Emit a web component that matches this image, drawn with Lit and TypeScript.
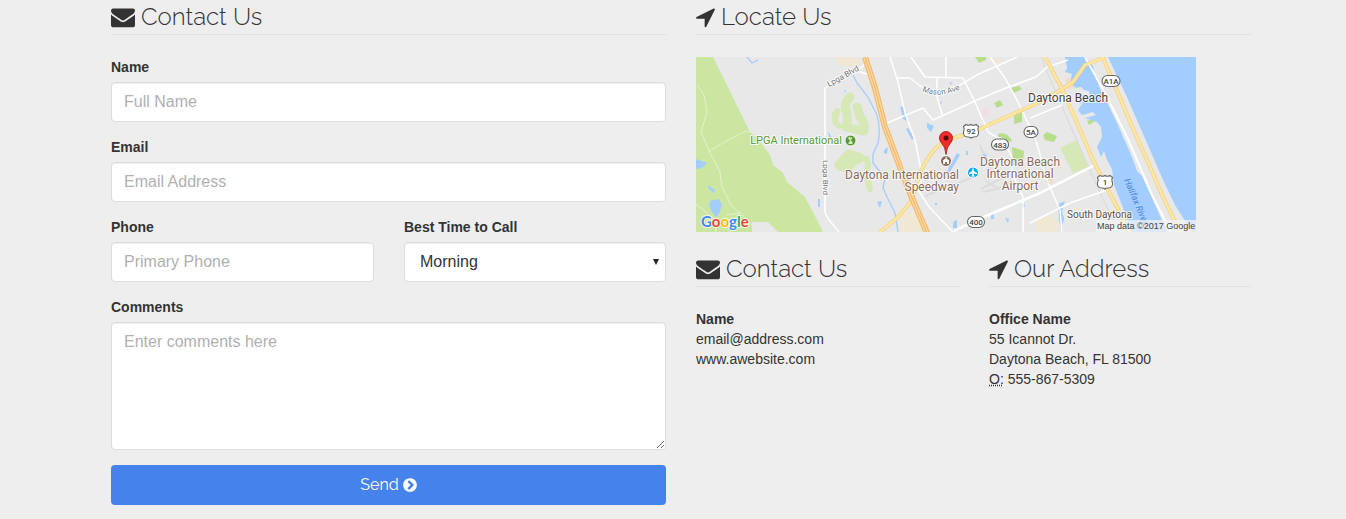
import { LitElement, html, css, svg } from "lit";
import { customElement } from "lit/decorators.js";

const envelope = html`<svg class="icon" viewBox="0 0 1792 1792" width="24" height="24" aria-hidden="true"><path d="M1792 710v794q0 66-47 113t-113 47h-1472q-66 0-113-47t-47-113v-794q44 49 101 87 362 246 497 345 57 42 92.5 65.5t94.5 48 110 24.5h2q51 0 110-24.5t94.5-48 92.5-65.5q170-123 498-345 57-39 100-87zm0-294q0 79-49 151t-122 123q-376 261-468 325-10 7-42.5 31t-54 38.5-52 32.5-57.5 27-50 9h-2q-23 0-50-9t-57.5-27-52-32.5-54-38.5-42.5-31q-91-64-262-182.5t-205-142.5q-62-42-117-115.5t-55-136.5q0-78 41.5-130t118.5-52h1472q65 0 112.5 47t47.5 113z"/></svg>`;
const arrow = html`<svg class="icon" viewBox="192 0 1408 1792" width="19" height="24" aria-hidden="true"><path d="M1593 349l-640 1280q-17 35-57 35-5 0-15-2-22-5-35.5-22.5t-13.5-39.5v-576h-576q-22 0-39.5-13.5t-22.5-35.5 4-42 29-30l1280-640q13-7 29-7 27 0 45 19 15 14 18.5 34.5t-6.5 39.5z"/></svg>`;
const chevron = html`<svg class="icon" viewBox="128 0 1536 1792" width="14" height="16" aria-hidden="true"><path d="M845 1395l454-454q19-19 19-45t-19-45l-454-454q-19-19-45-19t-45 19l-102 102q-19 19-19 45t19 45l307 307-307 307q-19 19-19 45t19 45l102 102q19 19 45 19t45-19zm819-499q0 209-103 385.5t-279.5 279.5-385.5 103-385.5-103-279.5-279.5-103-385.5 103-385.5 279.5-279.5 385.5-103 385.5 103 279.5 279.5 103 385.5z"/></svg>`;

const shield = (x: number, y: number, w: number, text: string) => svg`
  <rect x=${x - w / 2} y=${y - 5.5} width=${w} height="11" rx="5.5" fill="#fff" stroke="#666" stroke-width="1.1"/>
  <text class="route" x=${x} y=${y + 3}>${text}</text>`;

const usShield = (x: number, y: number, text: string) => svg`
  <path transform="translate(${x} ${y})" d="M-5-6.500Q-2.500-5 0-6.500Q2.500-5 5-6.500L7.500-4.500Q6-2 7.500 1Q8 6 3 6Q1 6 0 7Q-1 6-3 6Q-8 6-7.500 1Q-6-2-7.500-4.500Z" fill="#fff" stroke="#666" stroke-width="1.100"/>
  <text class="route" x=${x} y=${y + 3}>${text}</text>`;

@customElement("location-map")
export class LocationMap extends LitElement {
  static styles = css`
    :host { display: block; max-width: 500px; }
    .map { display: block; width: 100%; height: auto; font-family: Roboto, sans-serif; }
    .halo { paint-order: stroke; stroke: #fff; stroke-opacity: 0.8; stroke-width: 2px; stroke-linejoin: round; }
    .city { font-size: 12px; fill: #4d4138; }
    .town { font-size: 10px; fill: #5d5048; }
    .park { font-size: 11px; fill: #5a9a32; }
    .poi { font-size: 12px; fill: #8a6a58; }
    .street { font-size: 8px; fill: #777; }
    .river { font-size: 9px; fill: #4b86d6; font-style: italic; }
    .route { font-size: 8px; fill: #444; text-anchor: middle; font-weight: 500; }
    .end { text-anchor: end; }
    .mid { text-anchor: middle; }
    .logo { font-family: Lato, sans-serif; font-size: 15px; font-weight: 700; }
    .credit { font-family: "Liberation Sans", sans-serif; font-size: 9px; fill: #444; }
  `;
  render() {
    return html`<svg class="map" viewBox="0 0 500 175" role="img" aria-label="Map of Daytona Beach">
      <rect width="500" height="175" fill="#e8e8e8"/>
      <path fill="#cae6a1" d="M0 0H17L54 75L62 82L74 98L77 108L87 116L91 125L109 140L118 157L126 173V175H82L72 165H56V175H0Z"/>
      <g fill="none" stroke="#d6e8b5" stroke-linecap="round" stroke-linejoin="round">
        <path stroke-width="6" d="M139 57Q138 66 143 69M141 54L140 60"/>
        <path stroke-width="9" d="M154 40Q147 47 150 54Q153 61 150 70L162 73L168 74Q170 66 164 60Q162 52 161 50"/>
        <path stroke-width="11" d="M144 108Q152 112 156 104L163 101L153 98Z"/>
        <path stroke-width="6" d="M170 102Q174 108 170 116Q171 124 174 132"/>
      </g>
      <path fill="#d6e8b5" d="M364 91L381 83L392 110L377 116Z"/>
      <g fill="#b8dd8b">
        <path d="M279 0h11v3l-7 3zM314 31l9-2 3 3-8 4zM298 46l6-3 3 5-6 3zM318 57l8-3v11l-8 2zM347 78l4-3 10 4-3 6-9-2zM391 64l10-4v3l-8 5zM302 77q9-3 14 7l-4 1q-4-5-10-5zM316 90l12 4-1 12-10 2z"/>
      </g>
      <path fill="#f0e7d5" d="M140 0h19l6 6-5 4-20-2zM296 2l7-2 3 7-7 2zM203 152l18 4 6 19h-24zM340 165l12-9 12 10-4 9h-20z"/>
      <path fill="#f4dce5" d="M286 53l6-3 1 8-6 3z"/>
      <path fill="#f3dcc8" d="M369 22l4-2 5 10-5 3zM351 123l5-3 1 6-5 2z"/>
      <path stroke="#dcdcdc" fill="none" stroke-width="2" d="M229 139L280 119M284 88L296 117M283 99H289M285 132L306 121M290 124L301 131M287 135L305 131"/>
      <path stroke="#d8d8d8" fill="none" d="M345 0L354 22L388 100L407 142L423 175"/>
      <path fill="#a3cdff" d="M412 0L430 38L451 86L467 123L479 148L496 175H500V0Z"/>
      <path fill="#a3cdff" d="M369 0L371 11L369 15L376 17L374 25L380 31L379 36L384 41V47L388 44L382 53L386 58L397 55L400 58L389 61L401 65L405 70L406 80L401 90L405 100L408 94L411 103L416 112L418 128L424 143L436 175H471L457 143L446 119L441 114L436 100L421 66L411 45L406 36L400 22L397 9L389 0Z"/>
      <path fill="#e8e8e8" d="M379 31l6-1 3 3 5 1 1 7-6-3-8-1z"/>
      <g fill="#a3cdff">
        <path d="M0 102L11 106L6 111L0 112ZM12 128L19 133L18 136L13 132ZM14 144L23 142L26 148L23 157L20 160L16 155L13 148ZM132 74l3 5 1 7-3-5zM122 142h2v8h-2zM148 33l2 1-1 2zM204 49l4 2 3 13-4-2zM231 66l7 3-3 6-4-4zM210 72l2-1 6 10-2 2zM188 93l4-3-1 7-3-1zM203 108l4 3v5l-3-3zM214 117l3 2-1 3zM181 145l5-1-2 7zM258 164l3-1v8h-4v-4zM252 112l9-16 3 2-10 17-5 2zM244 45l2-1-1 4zM253 26l3-1-1 3zM239 146h2v2h-2zM287 97l4 1-2 6zM270 94h2v4h-2zM295 157l3-1v6h-3zM309 161l4 1-1 4zM325 148l4-1-1 4zM362 147l7-3-3 10 2 8-3 9-2-8z"/>
      </g>
      <g fill="none" stroke="#a3cdff" stroke-width="1.300">
        <path d="M51 0L56 6L62 3M156 16L161 26L172 40L181 58Q185 71 182 86L177 97L177 106L189 121L187 131L191 140L199 156L202 175"/>
      </g>
      <g fill="none" stroke="#e5f2ce" stroke-width="1">
        <path d="M1 28L8 38L11 55L5 75L13 94L24 115L26 130L35 148L46 158L56 168M12 95L25 87L50 74L54 75M0 147L18 162L20 175M30 158L45 156"/>
      </g>
      <g fill="none" stroke="#fff" stroke-width="1.500" stroke-linejoin="round">
        <path d="M169 7L161 14L129 31V156L133 163L143 175M161 14L171 17"/>
        <path d="M194 0L202 25L209 56L219 83L224 108L226 122L222 131L224 136L234 151L257 175"/>
        <path d="M215 0L229 20L267 21L279 45L292 75L307 84L316 100V116L327 140V175"/>
        <path d="M294 0L309 21L321 43L334 70L339 80L351 123L364 153L366 175"/>
        <path d="M201 21H214L227 31Q250 38 264 28L281 18L321 0M250 0V20M241 21V40L247 60"/>
        <path d="M186 71L191 66L227 51L237 63L281 43L310 31L340 20L351 10L372 3M334 61L366 48M334 166L354 156L374 146L411 133"/>
        <path d="M389 0L409 36L431 80L444 110L457 140L475 175" stroke-width="2"/>
        <path d="M257 175L264 171L297 156L344 136L399 108" stroke-width="2.500"/>
      </g>
      <g fill="none" stroke-linejoin="round">
        <path stroke="#efd28a" stroke-width="4" d="M184 175L201 161L214 146L219 133Q224 112 231 103Q239 89 251 83L277 75L297 66L344 45L366 32L377 25L389 8L407 1L422 36L434 65L454 110L467 140L484 175M349 0L366 32L384 73L397 103L412 133L434 175"/>
        <path stroke="#ffe6a0" stroke-width="2.500" d="M184 175L201 161L214 146L219 133Q224 112 231 103Q239 89 251 83L277 75L297 66L344 45L366 32L377 25L389 8L407 1L422 36L434 65L454 110L467 140L484 175M349 0L366 32L384 73L397 103L412 133L434 175"/>
        <path stroke="#f2b66a" stroke-width="6" d="M169 0L179 31L189 70L204 110L214 136L232 178"/>
        <path stroke="#ffd59a" stroke-width="4" d="M169 0L179 31L189 70L204 110L214 136L232 178"/>
        <path stroke="#f2b66a" stroke-width="1" d="M169 0L179 31L189 70L204 110L214 136L232 178"/>
      </g>
      <text class="street halo" transform="translate(133 30) rotate(-29)">Lpga Blvd</text>
      <text class="street halo" transform="translate(127 103) rotate(90)">Lpga Blvd</text>
      <path id="mason" fill="none" d="M226 34Q245 43 268 30"/>
      <text class="street halo"><textPath href="#mason">Mason Ave</textPath></text>
      <text class="river" transform="translate(428 123) rotate(67)">Halifax River</text>
      <text class="park halo end" x="146" y="87">LPGA International</text>
      <circle cx="154.500" cy="83.500" r="5.500" fill="#5a9a32" stroke="#fff"/>
      <path d="M152 81l1.500-1.500 1 1.500 1-1 1 1-2 2.500 2 1v2.500h-4v-1.500l1.500-1.500z" fill="#d6e8b5"/>
      <text class="city halo" x="332" y="45">Daytona Beach</text>
      <text class="poi halo end" x="263" y="122">Daytona International</text>
      <text class="poi halo end" x="263" y="134">Speedway</text>
      <text class="poi halo mid" x="324" y="109">Daytona Beach</text>
      <text class="poi halo mid" x="324" y="121">International</text>
      <text class="poi halo mid" x="324" y="133">Airport</text>
      <text class="town halo" x="371" y="161">South Daytona</text>
      ${usShield(275, 74, "92")}
      ${usShield(409, 125, "1")}
      ${shield(304, 87.5, 17, "483")}
      ${shield(335, 75, 14, "5A")}
      ${shield(415, 24, 18, "A1A")}
      ${shield(280, 165, 17, "400")}
      <circle cx="277" cy="115.500" r="5.500" fill="#12a9f4" stroke="#fff"/>
      <path fill="#fff" d="M276.300 111.500h1.400v2.500l3.300 2v1.200l-3.300-.8v1.800l1 .8v.8l-1.700-.4l-1.700.4v-.8l1-.8v-1.800l-3.300.8v-1.200l3.300-2z"/>
      <circle cx="250" cy="104" r="5.500" fill="#8a6a58" stroke="#fff"/>
      <path fill="#fff" d="M247 107v-3.500l3-2.500 3 2.500v3.500h-2v-2h-2v2zM249 99.500l3 .8-2 .7z"/>
      <path fill="#ee2c2b" stroke="#a8100f" stroke-width=".8" d="M250 97.500Q249.500 90 245.500 86Q243.500 84 243.500 81A6.500 6.500 0 0 1 256.500 81Q256.500 84 254.500 86Q250.500 90 250 97.500Z"/>
      <circle cx="250" cy="81" r="2.500" fill="#5c0b0b"/>
      <text class="logo halo" x="5" y="170"><tspan fill="#4285f4">G</tspan><tspan fill="#ea4335">o</tspan><tspan fill="#fbbc05">o</tspan><tspan fill="#4285f4">g</tspan><tspan fill="#34a853">l</tspan><tspan fill="#ea4335">e</tspan></text>
      <rect x="400" y="163" width="100" height="12" fill="#f5f5f5" fill-opacity=".7"/>
      <text class="credit" x="401" y="172">Map data ©2017 Google</text>
    </svg>`;
  }
}

@customElement("app-root")
export class AppRoot extends LitElement {
  static styles = css`
    :host {
      display: block;
      min-height: 100vh;
      background: #eee;
      color: #333;
      font: 14px/20px "Liberation Sans", Arial, sans-serif;
    }
    *, *::before, *::after { box-sizing: border-box; }
    .page {
      display: grid;
      grid-template-columns: 1fr 1fr;
      gap: 30px;
      align-items: start;
      margin: 0 95px 0 111px;
    }
    .heading {
      display: flex;
      align-items: center;
      gap: 6px;
      margin: 0 0 22px;
      border-bottom: 1px solid #e2e2e2;
      font: 300 24px/34px Raleway, Lato, sans-serif;
    }
    .icon { flex: none; fill: currentColor; }
    .form { display: grid; gap: 15px; }
    .field { display: grid; gap: 5px; min-width: 0; }
    .pair { display: grid; grid-template-columns: 263fr 262fr; gap: 30px; }
    .label { font-weight: 700; }
    .control {
      display: block;
      width: 100%;
      height: 40px;
      margin: 0;
      padding: 8px 12px;
      border: 1px solid #ddd;
      border-radius: 4px;
      background: #fff;
      box-shadow: inset 0 1px 1px rgba(0, 0, 0, 0.075);
      color: #333;
      font: 16px/22px "Liberation Sans", Arial, sans-serif;
      appearance: none;
    }
    .control::placeholder { color: #b0b0b0; opacity: 1; }
    .area { height: 128px; resize: vertical; }
    .picker { position: relative; }
    .choice { padding-left: 15px; }
    .caret { position: absolute; right: 7px; top: 17px; fill: #222; pointer-events: none; }
    .send {
      display: flex;
      align-items: center;
      justify-content: center;
      gap: 4px;
      width: 100%;
      height: 40px;
      border: 0;
      border-radius: 4px;
      background: #4582ec;
      color: #fff;
      font: 400 16px/22px Raleway, Lato, sans-serif;
    }
    .places { display: grid; grid-template-columns: 264fr 262fr; gap: 29px; margin-top: 20px; }
    .address { font-style: normal; }
    .office { text-decoration: underline dotted; cursor: help; }
  `;
  render() {
    return html`<main class="page">
      <section>
        <h2 class="heading">${envelope}<span>Contact Us</span></h2>
        <form class="form" @submit=${(e: Event) => e.preventDefault()}>
          <div class="field"><label class="label" for="name">Name</label><input class="control" id="name" type="text" placeholder="Full Name"></div>
          <div class="field"><label class="label" for="email">Email</label><input class="control" id="email" type="email" placeholder="Email Address"></div>
          <div class="pair">
            <div class="field"><label class="label" for="phone">Phone</label><input class="control" id="phone" type="tel" placeholder="Primary Phone"></div>
            <div class="field"><label class="label" for="time">Best Time to Call</label>
              <div class="picker">
                <select class="control choice" id="time"><option>Morning</option><option>Afternoon</option><option>Evening</option></select>
                <svg class="caret" width="6" height="6" viewBox="0 0 6 6" aria-hidden="true"><path d="M0 0H6L3 6Z"/></svg>
              </div>
            </div>
          </div>
          <div class="field"><label class="label" for="comments">Comments</label><textarea class="control area" id="comments" placeholder="Enter comments here"></textarea></div>
          <button class="send" type="submit"><span>Send</span>${chevron}</button>
        </form>
      </section>
      <section>
        <h2 class="heading">${arrow}<span>Locate Us</span></h2>
        <location-map></location-map>
        <div class="places">
          <div>
            <h2 class="heading">${envelope}<span>Contact Us</span></h2>
            <address class="address"><strong>Name</strong><br>email@address.com<br>www.awebsite.com</address>
          </div>
          <div>
            <h2 class="heading">${arrow}<span>Our Address</span></h2>
            <address class="address"><strong>Office Name</strong><br>55 Icannot Dr.<br>Daytona Beach, FL 81500<br><abbr class="office" title="Office">O:</abbr> 555-867-5309</address>
          </div>
        </div>
      </section>
    </main>`;
  }
}
